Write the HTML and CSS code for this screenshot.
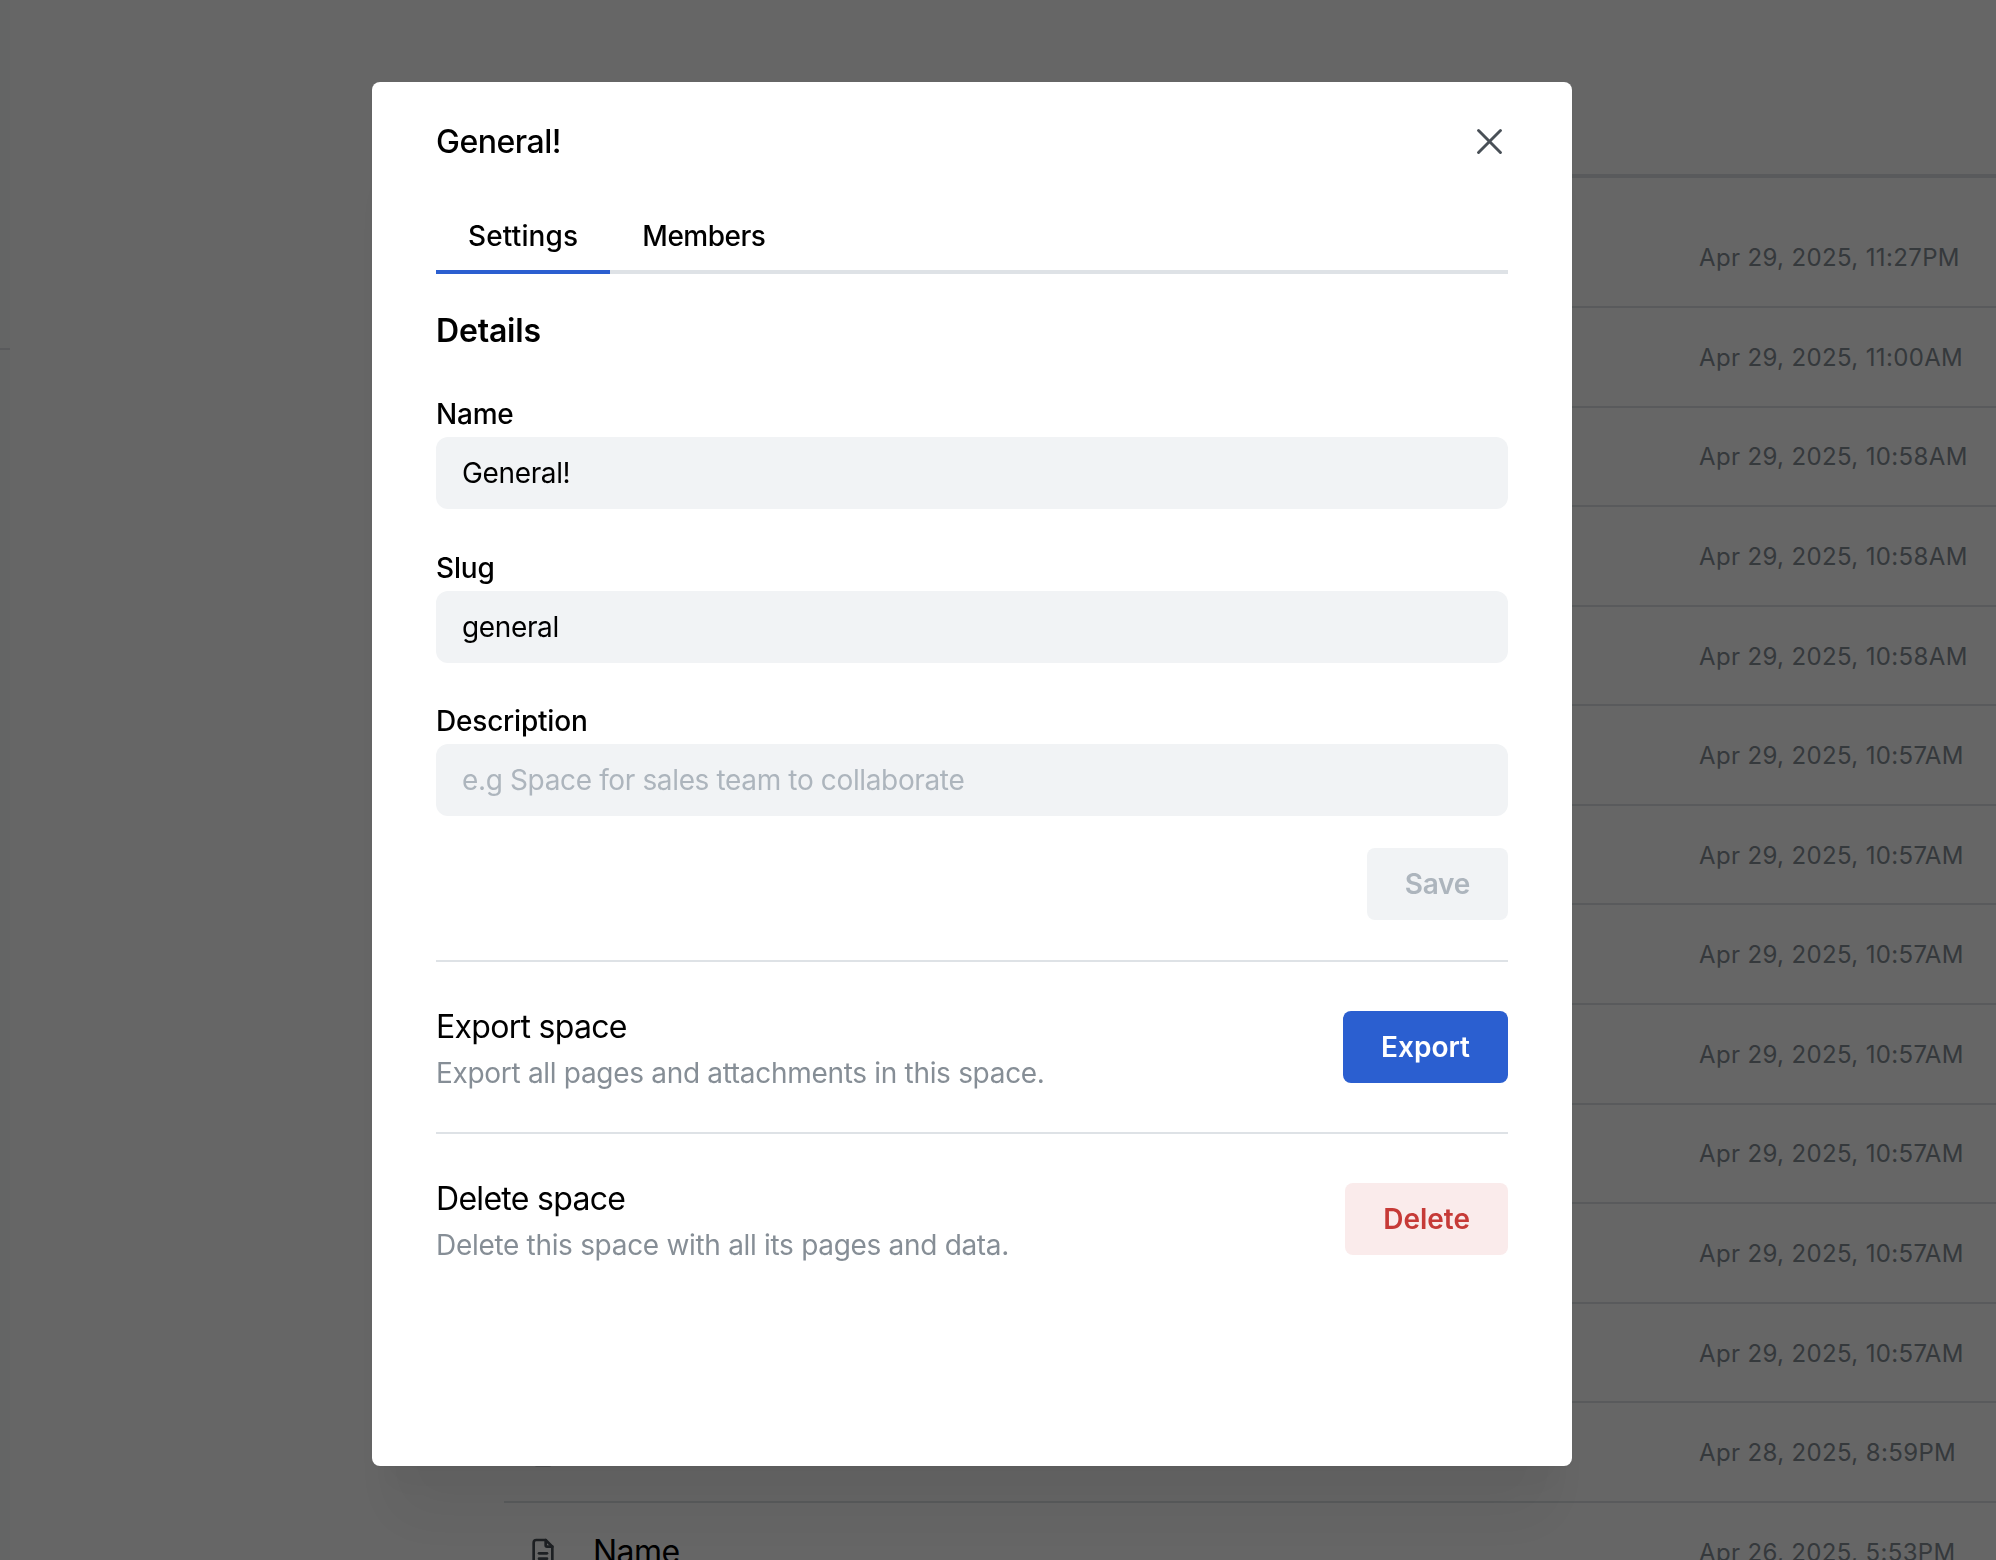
FILE: index.html
```html
<!DOCTYPE html>
<html lang="en">
<head>
<meta charset="utf-8">
<title>General!</title>
<link rel="stylesheet" href="styles.css">
</head>
<body>
<div class="page">
  <aside class="sidebar"><div class="sidebar-head"></div></aside>
  <main class="main">
    <div class="main-head"></div>
    <div class="rows">
      <div class="row"><span class="row-name"></span><span class="row-date">Apr 29, 2025, 11:27PM</span></div>
      <div class="row"><span class="row-name"></span><span class="row-date">Apr 29, 2025, 11:00AM</span></div>
      <div class="row"><span class="row-name"></span><span class="row-date">Apr 29, 2025, 10:58AM</span></div>
      <div class="row"><span class="row-name"></span><span class="row-date">Apr 29, 2025, 10:58AM</span></div>
      <div class="row"><span class="row-name"></span><span class="row-date">Apr 29, 2025, 10:58AM</span></div>
      <div class="row"><span class="row-name"></span><span class="row-date">Apr 29, 2025, 10:57AM</span></div>
      <div class="row"><span class="row-name"></span><span class="row-date">Apr 29, 2025, 10:57AM</span></div>
      <div class="row"><span class="row-name"></span><span class="row-date">Apr 29, 2025, 10:57AM</span></div>
      <div class="row"><span class="row-name"></span><span class="row-date">Apr 29, 2025, 10:57AM</span></div>
      <div class="row"><span class="row-name"></span><span class="row-date">Apr 29, 2025, 10:57AM</span></div>
      <div class="row"><span class="row-name"></span><span class="row-date">Apr 29, 2025, 10:57AM</span></div>
      <div class="row"><span class="row-name"></span><span class="row-date">Apr 29, 2025, 10:57AM</span></div>
      <div class="row">
        <svg class="file-icon" viewBox="0 0 24 24" fill="none" stroke="currentColor" stroke-width="2" stroke-linecap="round" stroke-linejoin="round"><path d="M14 3v4a1 1 0 0 0 1 1h4"/><path d="M17 21h-10a2 2 0 0 1 -2 -2v-14a2 2 0 0 1 2 -2h7l5 5v11a2 2 0 0 1 -2 2z"/><path d="M9 17h6"/><path d="M9 13h6"/></svg>
        <span class="row-name"></span><span class="row-date">Apr 28, 2025, 8:59PM</span>
      </div>
      <div class="row">
        <svg class="file-icon" viewBox="0 0 24 24" fill="none" stroke="currentColor" stroke-width="2" stroke-linecap="round" stroke-linejoin="round"><path d="M14 3v4a1 1 0 0 0 1 1h4"/><path d="M17 21h-10a2 2 0 0 1 -2 -2v-14a2 2 0 0 1 2 -2h7l5 5v11a2 2 0 0 1 -2 2z"/><path d="M9 17h6"/><path d="M9 13h6"/></svg>
        <span class="row-name">Name</span><span class="row-date">Apr 26, 2025, 5:53PM</span>
      </div>
    </div>
  </main>
</div>

<div class="overlay">
  <section class="modal" role="dialog" aria-label="General!">
    <header class="modal-head">
      <h2 class="modal-title">General!</h2>
      <button class="close" aria-label="Close">
        <svg class="close-icon" viewBox="0 0 24 24" fill="none" stroke="currentColor" stroke-width="2.8" stroke-linecap="round"><path d="M1.5 1.5 22.5 22.5"/><path d="M22.5 1.5 1.5 22.5"/></svg>
      </button>
    </header>

    <nav class="tabs">
      <button class="tab tab-active">Settings</button>
      <button class="tab tab-members">Members</button>
    </nav>

    <h3 class="section-title">Details</h3>

    <form class="form">
      <div class="field">
        <label class="label" for="f-name">Name</label>
        <input class="input" id="f-name" value="General!">
      </div>
      <div class="field">
        <label class="label" for="f-slug">Slug</label>
        <input class="input" id="f-slug" value="general">
      </div>
      <div class="field">
        <label class="label" for="f-desc">Description</label>
        <input class="input" id="f-desc" placeholder="e.g Space for sales team to collaborate">
      </div>
      <div class="form-actions">
        <button type="button" class="btn btn-save">Save</button>
      </div>
    </form>

    <div class="action-row action-first">
      <div class="action-text">
        <div class="action-title">Export space</div>
        <div class="action-desc">Export all pages and attachments in this space.</div>
      </div>
      <button class="btn btn-export">Export</button>
    </div>

    <div class="action-row">
      <div class="action-text">
        <div class="action-title">Delete space</div>
        <div class="action-desc">Delete this space with all its pages and data.</div>
      </div>
      <button class="btn btn-delete">Delete</button>
    </div>
  </section>
</div>
</body>
</html>
```

FILE: styles.css
```css
* { box-sizing: border-box; }

html, body {
  margin: 0;
  height: 1560px;
  overflow: hidden;
  background: #fff;
  color: #000;
  font-family: Inter, "Liberation Sans", sans-serif;
}

.page { display: flex; height: 1560px; }

.sidebar { flex: 0 0 10px; background: #fbfdfc; }
.sidebar-head { height: 350px; border-bottom: 2px solid #dee2e6; }

.main { flex: 1; min-width: 0; }
.main-head { height: 178px; margin: 0 0 30.4px 494px; border-bottom: 4px solid #dee2e6; }

.rows { margin-left: 494px; }

.row {
  display: flex;
  align-items: center;
  height: 99.58px;
  padding-left: 22.5px;
  border-bottom: 2px solid #dee2e6;
}

.file-icon { flex: 0 0 32px; width: 32px; height: 32px; margin: 1px 34.5px 0 0; color: #495057; }
.row-name { flex: 1; font-size: 32px; letter-spacing: -0.5px; white-space: nowrap; }
.row-date { flex: 0 0 297px; padding-top: 1.2px; font-size: 24px; color: #868e96; white-space: nowrap; letter-spacing: 0.36px; }

.overlay {
  position: fixed;
  inset: 0;
  display: flex;
  justify-content: center;
  align-items: flex-start;
  padding: 82px 52px 0 0;
  background: rgba(0, 0, 0, 0.6);
}

.modal {
  width: 1200px;
  height: 1384px;
  padding: 35px 64px 0;
  background: #fff;
  border-radius: 8px;
  box-shadow: 0 2px 6px rgba(0,0,0,.05), 0 72px 56px -14px rgba(0,0,0,.05), 0 34px 34px -14px rgba(0,0,0,.04);
}

.modal-head { display: flex; justify-content: space-between; align-items: center; height: 50px; }
.modal-title { margin: 0; font-size: 32px; font-weight: 500; line-height: 50px; letter-spacing: -0.48px; }

.close { display: flex; padding: 0; margin: 0 6px 2px 0; border: 0; background: none; color: #495057; }
.close-icon { width: 25px; height: 25px; }

.tabs { display: flex; margin-top: 35px; border-bottom: 4px solid #dee2e6; }
.tab {
  height: 72px;
  margin-bottom: -4px;
  padding: 0 32px;
  border: 0;
  border-bottom: 4px solid transparent;
  background: none;
  color: #000;
  font: 500 28px Inter, sans-serif;
  letter-spacing: 0.15px;
}
.tab-active { border-bottom-color: #2b5fd0; }
.tab-members { letter-spacing: -0.5px; }

.section-title { margin: 32px 0 0; font-size: 32px; font-weight: 600; line-height: 50px; letter-spacing: -0.2px; }

.form { display: flex; flex-direction: column; gap: 37.5px; margin-top: 37px; }

.field { display: flex; flex-direction: column; }
.label { height: 44px; font-size: 28px; font-weight: 500; line-height: 42px; letter-spacing: -0.2px; }
.input {
  height: 72px;
  padding: 0 26px;
  border: 0;
  border-radius: 12px;
  background: #f1f3f5;
  color: #000;
  font: 400 28px Inter, sans-serif;
  letter-spacing: -0.36px;
  outline: none;
}
.input::placeholder { color: #adb5bd; opacity: 1; }

.form-actions { display: flex; justify-content: flex-end; margin-top: -5.5px; }

.btn {
  height: 72px;
  padding: 0 38px;
  border: 0;
  border-radius: 8px;
  font: 600 28px Inter, sans-serif;
}
.btn-save { background: #f1f3f5; color: #adb5bd; letter-spacing: -0.25px; }
.btn-export { background: #2b5fd0; color: #fff; }
.btn-delete { background: #faebeb; color: #c63a37; }

.action-row {
  display: flex;
  justify-content: space-between;
  align-items: center;
  height: 172px;
  border-top: 2px solid #dee2e6;
}
.action-first { margin-top: 40px; }

.action-text { padding-top: 2px; }
.action-title { font-size: 32px; font-weight: 400; line-height: 49px; letter-spacing: -0.7px; }
.action-desc { font-size: 28px; color: #868e96; line-height: 44px; letter-spacing: -0.31px; }
```
